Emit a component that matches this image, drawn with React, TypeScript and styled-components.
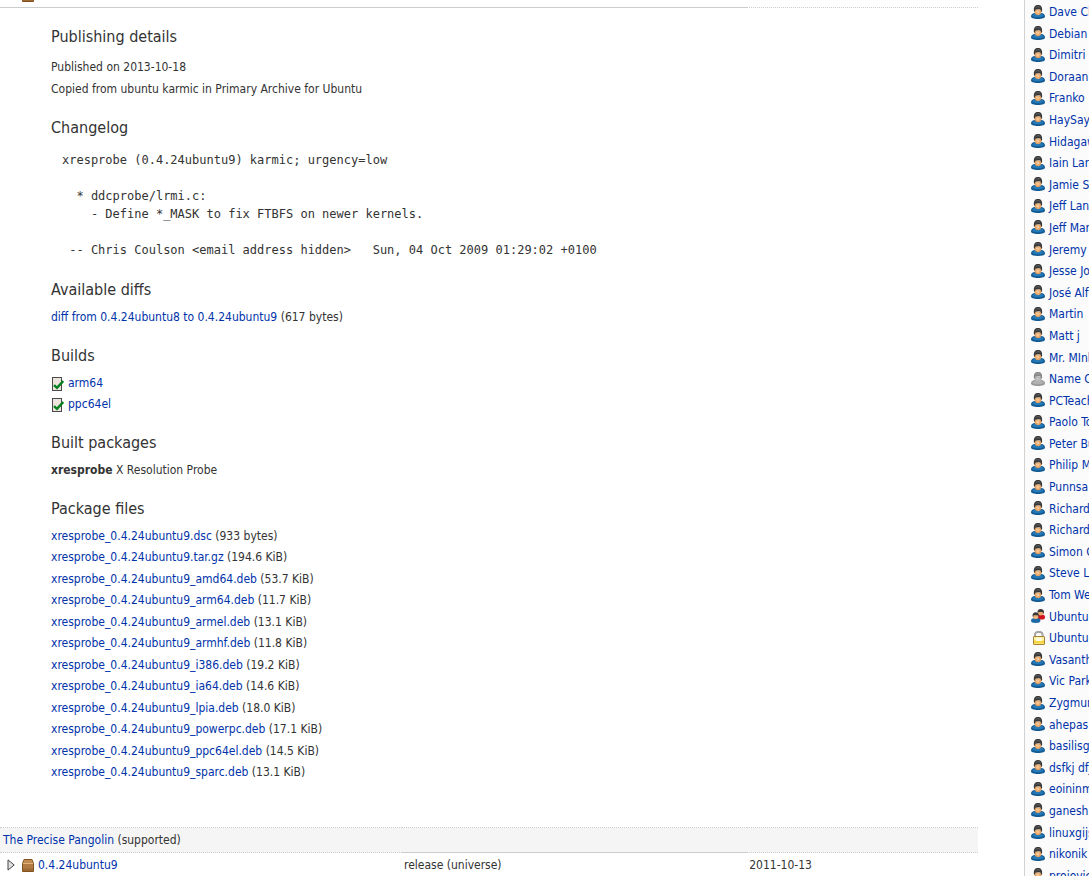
import React from "react";
import styled, { createGlobalStyle } from "styled-components";

const Global = createGlobalStyle`
  *, *::before, *::after { box-sizing: border-box; }
  body {
    margin: 0;
    background: #fff;
    color: #333;
    font-family: "DejaVu Sans Condensed", "DejaVu Sans", sans-serif;
    font-size: 12px;
    line-height: 22px;
  }
`;

const Page = styled.div`
  display: grid;
  grid-template-columns: minmax(0, 1fr) 65px;
  height: 100vh;
  overflow: hidden;
`;

const Content = styled.main`
  padding-right: 46px;
`;

/* The page is scrolled so that the first row is mostly above the window. */
const PublishingTable = styled.table`
  width: 100%;
  margin-top: -17px;
  table-layout: fixed;
  border-collapse: collapse;
`;

const Column = styled.col<{ $share?: string }>`
  width: ${(p) => p.$share ?? "auto"};
`;

const SeriesCell = styled.th`
  padding: 1px 3px;
  background: #f5f5f5;
  border-top: 1px dotted #ccc;
  border-bottom: 1px dotted #ccc;
  font-weight: 400;
  text-align: left;
`;

const Cell = styled.td<{ $top?: string; $bottom?: string }>`
  padding: 1px 2px;
  border-top: ${(p) => (p.$top ? `1px ${p.$top} #ccc` : "0")};
  border-bottom: ${(p) => (p.$bottom ? `1px ${p.$bottom} #ccc` : "0")};
  white-space: nowrap;
`;

const DetailsCell = styled.td`
  padding: 17px 0 28px 51px;
`;

const Link = styled.a`
  color: #03a;
  text-decoration: none;
  &:hover { text-decoration: underline; }
`;

const Version = styled.div`
  display: flex;
  align-items: center;
  gap: 4px;
  padding-left: 5px;
`;

const Expander = styled.button`
  display: flex;
  margin: 0 3px 0 0;
  padding: 0;
  border: 0;
  background: none;
`;

const Section = styled.section`
  margin-bottom: 16px;
`;

const Heading = styled.h2`
  margin: 0 0 4px;
  font-size: 16px;
  font-weight: 400;
  line-height: 24px;
`;

const History = styled.div`
  padding-top: 3px;
`;

const Line = styled.p`
  margin: 0;
`;

const Changelog = styled.pre`
  margin: 0;
  padding: 7px 11px 3px;
  font-family: "DejaVu Sans Mono", monospace;
  font-size: 12px;
  line-height: 18px;
`;

const List = styled.ul<{ $height?: number }>`
  display: flex;
  flex-direction: column;
  justify-content: space-between;
  min-height: ${(p) => (p.$height ? `${p.$height}px` : "0")};
  margin: 0;
  padding: 1px 0 0;
  line-height: 21px;
  list-style: none;
`;

const Item = styled.li`
  white-space: nowrap;
`;

const IconItem = styled(Item)`
  display: flex;
  align-items: center;
  gap: 4px;
`;

const Icon = styled.svg`
  display: block;
  flex: none;
`;

const Sidebar = styled.aside`
  overflow: hidden;
  padding: 1px 0 0 6px;
  background: #fbfbfb;
  border-left: 1px solid #d2d2d2;

  ${Icon} { margin-bottom: 2px; }
`;

const PersonIcon = ({ muted = false }: { muted?: boolean }) => (
  <Icon width="14" height="14" viewBox="0 0 14 14" aria-hidden="true">
    <path d="M0 11.200C0 9.200 1.600 8.200 4 8h6c2.400.2 4 1.200 4 3.200 0 2-2.500 2.700-7 2.700s-7-.7-7-2.700z" fill={muted ? "#989898" : "#145a92"} />
    <path d="M1.200 11C1.400 9.600 2.600 9 4.500 9h5c1.900 0 3.100.6 3.300 2-1.600.9-3.400 1.200-5.800 1.200S2.800 11.900 1.200 11z" fill={muted ? "#b0b0b0" : "#2378b8"} />
    <path d="M3.600 4.500h6.800C11 8 9.600 10.200 7 10.200S3 8 3.600 4.500z" fill={muted ? "#b4b4b4" : "#e3a265"} />
    <path d="M5 5.500h3.500c.4 2-.3 3.300-1.500 3.300S4.900 7.500 5 5.500z" fill={muted ? "#c2c2c2" : "#f8c590"} />
    <path d="M2.900 6C2.500 1.900 4 0 7 0s4.500 1.900 4.100 6l-1 .9-.4-2.100c-1.800-.7-3.700-.5-5.400 0L3.900 6.900z" fill={muted ? "#888" : "#393939"} />
    <path d="M4.600 2.700C5.400 1.500 8.200 1.300 9.400 2.600" fill="none" stroke={muted ? "#a4a4a4" : "#666"} />
  </Icon>
);

const TeamIcon = () => (
  <Icon width="14" height="14" viewBox="0 0 14 14" aria-hidden="true">
    <path d="M6 8.500C6 6 7 5.500 9 5.500h2c2 0 3 1 3 2.700 0 2-1.500 2.300-4 2.300s-4-.2-4-2z" fill="#d0121c" />
    <circle cx="9.700" cy="3.800" r="2.700" fill="#e9aa6e" />
    <path d="M6.500 4C6.300 1.200 7.500.1 9.700.1S13.200 1.200 13 4l-.9.800-.5-1.800H7.800z" fill="#393939" />
    <path d="M0 11.800C0 9.900 1.500 9 3.500 9h2.600c2 0 3.300.9 3.300 2.800 0 1.600-1.600 2.100-4.700 2.100S0 13.400 0 11.800z" fill="#1c69a8" />
    <circle cx="4.700" cy="7.300" r="2.800" fill="#efb27a" />
    <path d="M1.500 7.300C1.300 4.500 2.700 3.300 4.700 3.300s3.400 1.200 3.200 4l-.8.800-.4-1.900h-4l-.4 1.900z" fill="#393939" />
  </Icon>
);

const LockIcon = () => (
  <Icon width="14" height="14" viewBox="0 0 14 14" aria-hidden="true">
    <path d="M4 7V4.200C4 2 5.400.9 7.800.9s3.800 1.100 3.800 3.300V7" fill="none" stroke="#858585" strokeWidth="1.800" />
    <path d="M4 7V4.200C4 2 5.400.9 7.800.9s3.800 1.100 3.800 3.300V7" fill="none" stroke="#d8d8d8" strokeWidth=".6" />
    <rect x="2.500" y="5.500" width="11" height="8" rx=".5" fill="#fff2a0" stroke="#a98338" />
    <path d="M3 9.500h10v3H3z" fill="#f4d440" />
    <path d="M5 7h6v3H5z" fill="#fffbe0" />
  </Icon>
);

const BuiltIcon = () => (
  <Icon width="13" height="14" viewBox="0 0 13 14" aria-hidden="true">
    <rect x="1.500" y=".5" width="9" height="13" fill="#ece4dd" stroke="#4a4a4a" />
    <path d="M3 8.200l3 2.600L12.300 4" fill="none" stroke="#007f1c" strokeWidth="2.400" />
  </Icon>
);

const PackageIcon = () => (
  <Icon width="12" height="13" viewBox="0 0 12 13" aria-hidden="true">
    <path d="M2 .5h8l1.500 4v8H.5v-8z" fill="#b07a42" stroke="#82521f" />
    <path d="M2.300 1h7.400l1.100 3.500H1.200z" fill="#c08a50" />
    <path d="M1 4.500h10" stroke="#e0b27c" />
    <path d="M1 9.500h10v2.500H1z" fill="#9c6833" />
  </Icon>
);

const ArrowIcon = ({ open = false }: { open?: boolean }) => (
  <Icon width="8" height="12" viewBox="0 0 8 12" aria-hidden="true">
    <path d={open ? "M.5 3.500h7L4 9.500z" : "M1 .9v10.200L7.200 6z"} fill="#e2e2e2" stroke="#444" />
  </Icon>
);

type Kind = "person" | "inactive" | "team" | "private";

const subscribers: [string, Kind?][] = [
  ["Dave Chiluk"], ["Debian"], ["Dimitri"], ["Doraann2"], ["Franko"],
  ["HaySayCheese"], ["Hidagawa"], ["Iain Lane"], ["Jamie Strandboge"], ["Jeff Lane"],
  ["Jeff Marcom"], ["Jeremy"], ["Jesse Jones"], ["José Alfonso"], ["Martin"],
  ["Matt j"], ["Mr. MInhaj"], ["Name Changed", "inactive"], ["PCTeacher012"], ["Paolo Topa"],
  ["Peter Bullert"], ["Philip Muskovac"], ["Punnsa"], ["Richard Seguin"], ["Richard Williams"],
  ["Simon Quigley"], ["Steve Langasek"], ["Tom Weiss"], ["Ubuntu Security", "team"], ["Ubuntu Touch", "private"],
  ["Vasanth"], ["Vic Parker"], ["Zygmunt Krynicki"], ["ahepas"], ["basilisgabri"],
  ["dsfkj dfjx"], ["eoininmoran"], ["ganesh"], ["linuxgijs"], ["nikonik"], ["projovic"],
];

const SubscriberIcon = ({ kind }: { kind: Kind }) => {
  if (kind === "team") return <TeamIcon />;
  if (kind === "private") return <LockIcon />;
  return <PersonIcon muted={kind === "inactive"} />;
};

const files = [
  [".dsc", "933 bytes"],
  [".tar.gz", "194.6 KiB"],
  ["_amd64.deb", "53.7 KiB"],
  ["_arm64.deb", "11.7 KiB"],
  ["_armel.deb", "13.1 KiB"],
  ["_armhf.deb", "11.8 KiB"],
  ["_i386.deb", "19.2 KiB"],
  ["_ia64.deb", "14.6 KiB"],
  ["_lpia.deb", "18.0 KiB"],
  ["_powerpc.deb", "17.1 KiB"],
  ["_ppc64el.deb", "14.5 KiB"],
  ["_sparc.deb", "13.1 KiB"],
];

const changelog = `xresprobe (0.4.24ubuntu9) karmic; urgency=low

  * ddcprobe/lrmi.c:
    - Define *_MASK to fix FTBFS on newer kernels.

 -- Chris Coulson <email address hidden>   Sun, 04 Oct 2009 01:29:02 +0100`;

const VersionLabel = ({ open = false }: { open?: boolean }) => (
  <Version>
    <Expander type="button" aria-label="Toggle details" aria-expanded={open}>
      <ArrowIcon open={open} />
    </Expander>
    <PackageIcon />
    <Link href="#version">0.4.24ubuntu9</Link>
  </Version>
);

export default function App() {
  return (
    <>
      <Global />
      <Page>
        <Content>
          <PublishingTable>
            <colgroup>
              <Column $share="41.1%" />
              <Column $share="35.3%" />
              <Column />
            </colgroup>
            <tbody>
              <tr>
                <Cell $bottom="solid"><VersionLabel open /></Cell>
                <Cell $bottom="solid">release (universe)</Cell>
                <Cell $bottom="dotted">2013-10-18</Cell>
              </tr>
              <tr>
                <DetailsCell colSpan={3}>
                  <Section>
                    <Heading>Publishing details</Heading>
                    <History>
                      <Line>Published on 2013-10-18</Line>
                      <Line>Copied from ubuntu karmic in Primary Archive for Ubuntu</Line>
                    </History>
                  </Section>
                  <Section>
                    <Heading>Changelog</Heading>
                    <Changelog>{changelog}</Changelog>
                  </Section>
                  <Section>
                    <Heading>Available diffs</Heading>
                    <Line>
                      <Link href="#diff">diff from 0.4.24ubuntu8 to 0.4.24ubuntu9</Link> (617 bytes)
                    </Line>
                  </Section>
                  <Section>
                    <Heading>Builds</Heading>
                    <List>
                      {["arm64", "ppc64el"].map((arch) => (
                        <IconItem key={arch}>
                          <BuiltIcon />
                          <Link href={`#${arch}`}>{arch}</Link>
                        </IconItem>
                      ))}
                    </List>
                  </Section>
                  <Section>
                    <Heading>Built packages</Heading>
                    <Line><strong>xresprobe</strong> X Resolution Probe</Line>
                  </Section>
                  <Section>
                    <Heading>Package files</Heading>
                    <List $height={258}>
                      {files.map(([suffix, size]) => (
                        <Item key={suffix}>
                          <Link href="#file">{`xresprobe_0.4.24ubuntu9${suffix}`}</Link> ({size})
                        </Item>
                      ))}
                    </List>
                  </Section>
                </DetailsCell>
              </tr>
              <tr>
                <SeriesCell colSpan={3}>
                  <Link href="#precise">The Precise Pangolin</Link> (supported)
                </SeriesCell>
              </tr>
              <tr>
                <Cell><VersionLabel /></Cell>
                <Cell $top="solid">release (universe)</Cell>
                <Cell>2011-10-13</Cell>
              </tr>
            </tbody>
          </PublishingTable>
        </Content>
        <Sidebar>
          <List $height={886}>
            {subscribers.map(([name, kind = "person"]) => (
              <IconItem key={name}>
                <SubscriberIcon kind={kind} />
                <Link href="#person">{name}</Link>
              </IconItem>
            ))}
          </List>
        </Sidebar>
      </Page>
    </>
  );
}
